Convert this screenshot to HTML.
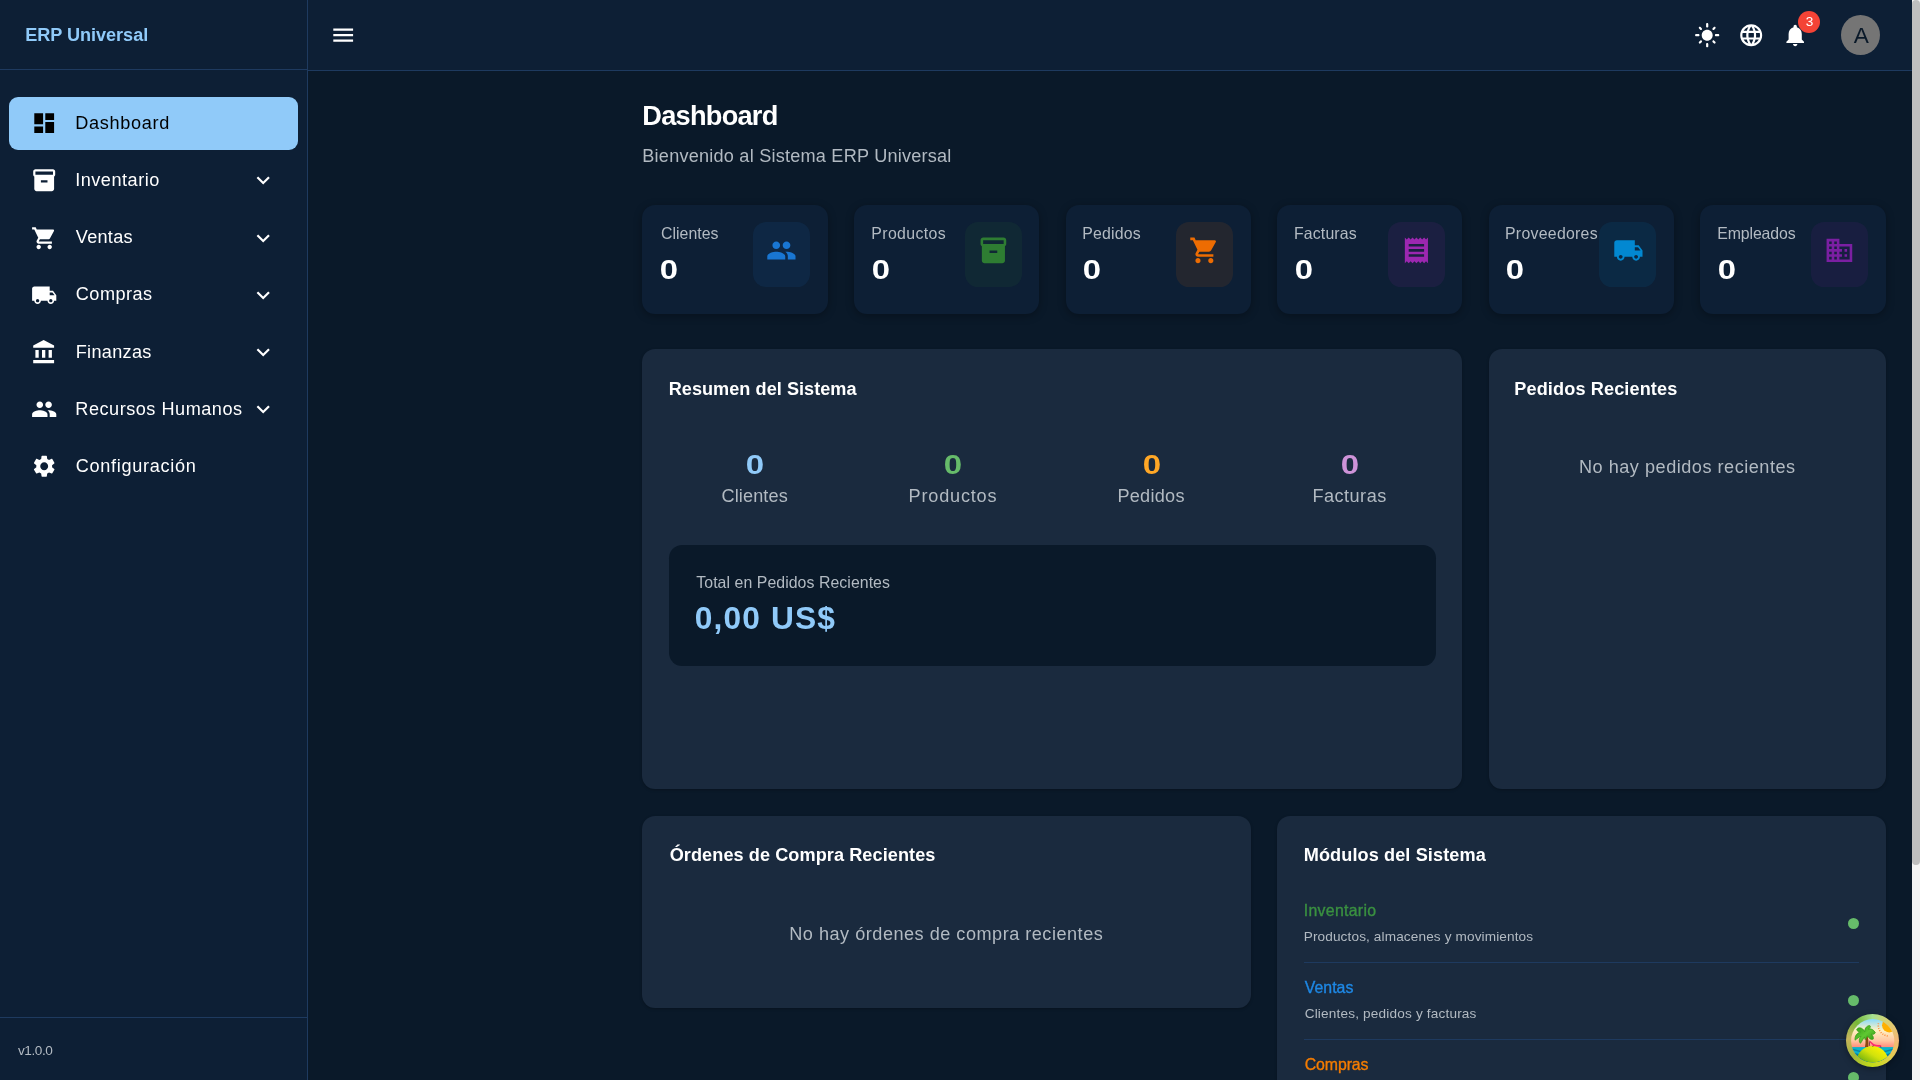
<!DOCTYPE html>
<html lang="es"><head><meta charset="utf-8"><title>ERP Universal - Dashboard</title>
<style>
html,body{margin:0;padding:0}
body{width:1920px;height:1080px;overflow:hidden;position:relative;background:#0a1929;font-family:"Liberation Sans",sans-serif}
.b,.i,.t{position:absolute;box-sizing:border-box}
.t{white-space:nowrap;line-height:1}
#app{position:absolute;left:0;top:0;width:1920px;height:1080px;overflow:hidden;will-change:transform}
.card{background:#0d1f35;border-radius:13.2px;box-shadow:0 2px 9px rgba(0,0,0,.3)}
.paper{background:#1a2a3e;border-radius:13.2px;box-shadow:0 1px 3px rgba(0,0,0,.25)}
</style></head><body>
<div id="app">
<main>
<div class="b card" style="left:642.4px;top:205px;width:185.2px;height:108.8px"></div>
<div class="b" style="left:752.9px;top:222px;width:57.2px;height:65px;border-radius:13.2px;background:rgba(25,118,210,0.1)"></div>
<svg class="i" style="left:766.10px;top:235.20px;width:30.8px;height:30.8px" viewBox="0 0 24 24" fill="#1976d2"><path d="M16 11c1.660 0 2.990-1.340 2.990-3S17.660 5 16 5c-1.660 0-3 1.340-3 3s1.340 3 3 3zm-8 0c1.660 0 2.990-1.340 2.990-3S9.660 5 8 5C6.340 5 5 6.340 5 8s1.340 3 3 3zm0 2c-2.330 0-7 1.170-7 3.500V19h14v-2.500c0-2.330-4.670-3.500-7-3.500zm8 0c-.29 0-.62.02-.97.05 1.160.84 1.970 1.970 1.970 3.450V19h6v-2.500c0-2.330-4.670-3.500-7-3.500z"/></svg>
<div class="b card" style="left:854.0px;top:205px;width:185.2px;height:108.8px"></div>
<div class="b" style="left:964.5px;top:222px;width:57.2px;height:65px;border-radius:13.2px;background:rgba(46,125,50,0.1)"></div>
<svg class="i" style="left:977.70px;top:235.20px;width:30.8px;height:30.8px" viewBox="0 0 24 24" fill="#2e7d32"><path d="M20 2H4c-1 0-2 .9-2 2v3.01c0 .72.43 1.34 1 1.69V20c0 1.1 1.1 2 2 2h14c.9 0 2-.9 2-2V8.7c.57-.35 1-.97 1-1.69V4c0-1.1-1-2-2-2zm-5 12H9v-2h6v2zm5-7H4V4h16v3z"/></svg>
<div class="b card" style="left:1065.6px;top:205px;width:185.2px;height:108.8px"></div>
<div class="b" style="left:1176.1px;top:222px;width:57.2px;height:65px;border-radius:13.2px;background:rgba(237,108,2,0.1)"></div>
<svg class="i" style="left:1189.30px;top:235.20px;width:30.8px;height:30.8px" viewBox="0 0 24 24" fill="#ed6c02"><path d="M7 18c-1.1 0-1.99.9-1.99 2S5.9 22 7 22s2-.9 2-2-.9-2-2-2zM1 2v2h2l3.6 7.59-1.35 2.45c-.16.28-.25.61-.25.96 0 1.1.9 2 2 2h12v-2H7.42c-.14 0-.25-.11-.25-.25l.03-.12.9-1.63h7.45c.75 0 1.41-.41 1.75-1.03l3.58-6.49c.08-.14.12-.31.12-.48 0-.55-.45-1-1-1H5.21l-.94-2H1zm16 16c-1.1 0-1.99.9-1.99 2s.89 2 1.99 2 2-.9 2-2-.9-2-2-2z"/></svg>
<div class="b card" style="left:1277.2px;top:205px;width:185.2px;height:108.8px"></div>
<div class="b" style="left:1387.7px;top:222px;width:57.2px;height:65px;border-radius:13.2px;background:rgba(156,39,176,0.1)"></div>
<svg class="i" style="left:1400.90px;top:235.20px;width:30.8px;height:30.8px" viewBox="0 0 24 24" fill="#9c27b0"><path d="M18 17H6v-2h12v2zm0-4H6v-2h12v2zm0-4H6V7h12v2zM3 22l1.500-1.500L6 22l1.500-1.500L9 22l1.500-1.500L12 22l1.500-1.500L15 22l1.500-1.500L18 22l1.500-1.500L21 22V2l-1.500 1.500L18 2l-1.500 1.500L15 2l-1.500 1.500L12 2l-1.500 1.500L9 2 7.500 3.500 6 2 4.500 3.500 3 2v20z"/></svg>
<div class="b card" style="left:1488.8px;top:205px;width:185.2px;height:108.8px"></div>
<div class="b" style="left:1599.3px;top:222px;width:57.2px;height:65px;border-radius:13.2px;background:rgba(2,136,209,0.1)"></div>
<svg class="i" style="left:1612.50px;top:235.20px;width:30.8px;height:30.8px" viewBox="0 0 24 24" fill="#0288d1"><path d="M20 8h-3V4H3c-1.1 0-2 .9-2 2v11h2c0 1.66 1.34 3 3 3s3-1.34 3-3h6c0 1.66 1.34 3 3 3s3-1.34 3-3h2v-5l-3-4zM6 18.5c-.83 0-1.5-.67-1.5-1.5s.67-1.500 1.5-1.500 1.5.67 1.5 1.5-.67 1.5-1.5 1.5zm13.5-9l1.960 2.500H17V9.500h2.500zm-1.500 9c-.83 0-1.500-.67-1.500-1.500s.67-1.500 1.500-1.500 1.500.67 1.500 1.500-.67 1.500-1.500 1.500z"/></svg>
<div class="b card" style="left:1700.4px;top:205px;width:185.2px;height:108.8px"></div>
<div class="b" style="left:1810.9px;top:222px;width:57.2px;height:65px;border-radius:13.2px;background:rgba(123,31,162,0.1)"></div>
<svg class="i" style="left:1824.10px;top:235.20px;width:30.8px;height:30.8px" viewBox="0 0 24 24" fill="#7b1fa2"><path d="M12 7V3H2v18h20V7H12zM6 19H4v-2h2v2zm0-4H4v-2h2v2zm0-4H4V9h2v2zm0-4H4V5h2v2zm4 12H8v-2h2v2zm0-4H8v-2h2v2zm0-4H8V9h2v2zm0-4H8V5h2v2zm10 12h-8v-2h2v-2h-2v-2h2v-2h-2V9h8v10zm-2-8h-2v2h2v-2zm0 4h-2v2h2v-2z"/></svg>
<div class="b paper" style="left:642.4px;top:348.7px;width:820px;height:440px"></div>
<div class="b paper" style="left:1488.8px;top:348.7px;width:396.8px;height:440px"></div>
<div class="b" style="left:669.2px;top:545px;width:766.8px;height:120.8px;border-radius:13.2px;background:#0a1929"></div>
<div class="b paper" style="left:642.4px;top:815.8px;width:608.4px;height:192.5px"></div>
<div class="b paper" style="left:1277.2px;top:815.8px;width:608.4px;height:400px"></div>
<div class="b" style="left:1304px;top:962.0px;width:555.2px;height:1px;background:#1e3a5f"></div>
<div class="b" style="left:1848px;top:917.8px;width:11px;height:11px;border-radius:50%;background:#66bb6a"></div>
<div class="b" style="left:1304px;top:1039.1px;width:555.2px;height:1px;background:#1e3a5f"></div>
<div class="b" style="left:1848px;top:994.9px;width:11px;height:11px;border-radius:50%;background:#66bb6a"></div>
<div class="b" style="left:1304px;top:1116.2px;width:555.2px;height:1px;background:#1e3a5f"></div>
<div class="b" style="left:1848px;top:1072.0px;width:11px;height:11px;border-radius:50%;background:#66bb6a"></div>
<div class="t" id="t9" style="left:642.30px;top:102px;font-size:27.19px;color:#ffffff;font-weight:700;letter-spacing:-0.750px;">Dashboard</div>
<div class="t" id="t10" style="left:642.30px;top:147px;font-size:18.13px;color:#b2bac2;letter-spacing:0.219px;">Bienvenido al Sistema ERP Universal</div>
<div class="t" id="t11" style="left:661.00px;top:226px;font-size:15.86px;color:#b2bac2;letter-spacing:0.019px;">Clientes</div>
<div class="t" id="t12" style="left:660.00px;top:256px;font-size:27.19px;color:#ffffff;font-weight:700;transform:scaleX(1.208);transform-origin:1.0px 50%;">0</div>
<div class="t" id="t13" style="left:871.30px;top:226px;font-size:15.86px;color:#b2bac2;letter-spacing:0.365px;">Productos</div>
<div class="t" id="t14" style="left:871.60px;top:256px;font-size:27.19px;color:#ffffff;font-weight:700;transform:scaleX(1.208);transform-origin:1.0px 50%;">0</div>
<div class="t" id="t15" style="left:1082.30px;top:226px;font-size:15.86px;color:#b2bac2;letter-spacing:0.170px;">Pedidos</div>
<div class="t" id="t16" style="left:1083.20px;top:256px;font-size:27.19px;color:#ffffff;font-weight:700;transform:scaleX(1.208);transform-origin:1.0px 50%;">0</div>
<div class="t" id="t17" style="left:1294.00px;top:226px;font-size:15.86px;color:#b2bac2;letter-spacing:0.134px;">Facturas</div>
<div class="t" id="t18" style="left:1294.80px;top:256px;font-size:27.19px;color:#ffffff;font-weight:700;transform:scaleX(1.208);transform-origin:1.0px 50%;">0</div>
<div class="t" id="t19" style="left:1505.00px;top:226px;font-size:15.86px;color:#b2bac2;letter-spacing:0.271px;">Proveedores</div>
<div class="t" id="t20" style="left:1506.40px;top:256px;font-size:27.19px;color:#ffffff;font-weight:700;transform:scaleX(1.208);transform-origin:1.0px 50%;">0</div>
<div class="t" id="t21" style="left:1717.30px;top:226px;font-size:15.86px;color:#b2bac2;letter-spacing:-0.127px;">Empleados</div>
<div class="t" id="t22" style="left:1718.00px;top:256px;font-size:27.19px;color:#ffffff;font-weight:700;transform:scaleX(1.208);transform-origin:1.0px 50%;">0</div>
<div class="t" id="t23" style="left:668.70px;top:380px;font-size:18.13px;color:#ffffff;font-weight:700;letter-spacing:0.037px;">Resumen del Sistema</div>
<div class="t" id="t24" style="left:1514.30px;top:380px;font-size:18.13px;color:#ffffff;font-weight:700;letter-spacing:0.121px;">Pedidos Recientes</div>
<div class="t" id="t25" style="left:745.70px;top:451px;font-size:27.19px;color:#90caf9;font-weight:700;transform:scaleX(1.215);transform-origin:1.0px 50%;">0</div>
<div class="t" id="t26" style="left:721.45px;top:487px;font-size:18.13px;color:#b2bac2;letter-spacing:0.133px;">Clientes</div>
<div class="t" id="t27" style="left:944.10px;top:451px;font-size:27.19px;color:#66bb6a;font-weight:700;transform:scaleX(1.215);transform-origin:1.0px 50%;">0</div>
<div class="t" id="t28" style="left:908.50px;top:487px;font-size:18.13px;color:#b2bac2;letter-spacing:0.815px;">Productos</div>
<div class="t" id="t29" style="left:1142.50px;top:451px;font-size:27.19px;color:#ffa726;font-weight:700;transform:scaleX(1.215);transform-origin:1.0px 50%;">0</div>
<div class="t" id="t30" style="left:1117.40px;top:487px;font-size:18.13px;color:#b2bac2;letter-spacing:0.269px;">Pedidos</div>
<div class="t" id="t31" style="left:1340.90px;top:451px;font-size:27.19px;color:#ce93d8;font-weight:700;transform:scaleX(1.215);transform-origin:1.0px 50%;">0</div>
<div class="t" id="t32" style="left:1312.40px;top:487px;font-size:18.13px;color:#b2bac2;letter-spacing:0.487px;">Facturas</div>
<div class="t" id="t33" style="left:696.30px;top:575px;font-size:15.86px;color:#b2bac2;letter-spacing:0.057px;">Total en Pedidos Recientes</div>
<div class="t" id="t34" style="left:694.80px;top:603px;font-size:31.72px;color:#90caf9;font-weight:700;letter-spacing:1.127px;">0,00 US$</div>
<div class="t" id="t35" style="left:1579.00px;top:458px;font-size:18.13px;color:#b2bac2;letter-spacing:0.509px;">No hay pedidos recientes</div>
<div class="t" id="t36" style="left:669.70px;top:846px;font-size:18.13px;color:#ffffff;font-weight:700;letter-spacing:0.076px;">Órdenes de Compra Recientes</div>
<div class="t" id="t37" style="left:789.30px;top:925px;font-size:18.13px;color:#b2bac2;letter-spacing:0.500px;">No hay órdenes de compra recientes</div>
<div class="t" id="t38" style="left:1303.70px;top:846px;font-size:18.13px;color:#ffffff;font-weight:700;letter-spacing:0.108px;">Módulos del Sistema</div>
<div class="t" id="t39" style="left:1303.70px;top:903px;font-size:15.86px;color:#3a9140;letter-spacing:0.308px;-webkit-text-stroke:0.35px #3a9140;">Inventario</div>
<div class="t" id="t40" style="left:1303.70px;top:930px;font-size:13.6px;color:#b2bac2;letter-spacing:0.129px;">Productos, almacenes y movimientos</div>
<div class="t" id="t41" style="left:1304.70px;top:980px;font-size:15.86px;color:#1e88e5;letter-spacing:0.046px;-webkit-text-stroke:0.35px #1e88e5;">Ventas</div>
<div class="t" id="t42" style="left:1304.70px;top:1007px;font-size:13.6px;color:#b2bac2;letter-spacing:0.174px;">Clientes, pedidos y facturas</div>
<div class="t" id="t43" style="left:1304.70px;top:1057px;font-size:15.86px;color:#f57c00;letter-spacing:-0.084px;-webkit-text-stroke:0.35px #f57c00;">Compras</div>
<div class="t" id="t44" style="left:1303.70px;top:1084px;font-size:13.6px;color:#b2bac2;letter-spacing:0.244px;">Proveedores y órdenes de compra</div>
</main>
<aside>
<div class="b" style="left:0;top:0;width:308px;height:1080px;background:#0d1f35;border-right:1px solid #1e3a5f"></div>
<div class="b" style="left:0;top:69px;width:307px;height:1px;background:#1e3a5f"></div>
<div class="b" style="left:0;top:1017px;width:307px;height:1px;background:#1e3a5f"></div>
<div class="b" style="left:9px;top:97px;width:289px;height:53px;background:#90caf9;border-radius:9px"></div>
<svg class="i" style="left:30.80px;top:110.20px;width:26.4px;height:26.4px" viewBox="0 0 24 24" fill="#000"><path d="M3 13h8V3H3v10zm0 8h8v-6H3v6zm10 0h8V11h-8v10zm0-18v6h8V3h-8z"/></svg>
<svg class="i" style="left:30.80px;top:167.40px;width:26.4px;height:26.4px" viewBox="0 0 24 24" fill="#ffffff"><path d="M20 2H4c-1 0-2 .9-2 2v3.01c0 .72.43 1.34 1 1.69V20c0 1.1 1.1 2 2 2h14c.9 0 2-.9 2-2V8.7c.57-.35 1-.97 1-1.69V4c0-1.1-1-2-2-2zm-5 12H9v-2h6v2zm5-7H4V4h16v3z"/></svg>
<svg class="i" style="left:249.80px;top:167.40px;width:26.4px;height:26.4px" viewBox="0 0 24 24" fill="#ffffff"><path d="M16.590 8.590L12 13.170 7.410 8.590 6 10l6 6 6-6z"/></svg>
<svg class="i" style="left:30.80px;top:224.60px;width:26.4px;height:26.4px" viewBox="0 0 24 24" fill="#ffffff"><path d="M7 18c-1.1 0-1.99.9-1.99 2S5.9 22 7 22s2-.9 2-2-.9-2-2-2zM1 2v2h2l3.6 7.59-1.35 2.45c-.16.28-.25.61-.25.96 0 1.1.9 2 2 2h12v-2H7.42c-.14 0-.25-.11-.25-.25l.03-.12.9-1.63h7.45c.75 0 1.41-.41 1.75-1.03l3.58-6.49c.08-.14.12-.31.12-.48 0-.55-.45-1-1-1H5.21l-.94-2H1zm16 16c-1.1 0-1.99.9-1.99 2s.89 2 1.99 2 2-.9 2-2-.9-2-2-2z"/></svg>
<svg class="i" style="left:249.80px;top:224.60px;width:26.4px;height:26.4px" viewBox="0 0 24 24" fill="#ffffff"><path d="M16.590 8.590L12 13.170 7.410 8.590 6 10l6 6 6-6z"/></svg>
<svg class="i" style="left:30.80px;top:281.80px;width:26.4px;height:26.4px" viewBox="0 0 24 24" fill="#ffffff"><path d="M20 8h-3V4H3c-1.1 0-2 .9-2 2v11h2c0 1.66 1.34 3 3 3s3-1.34 3-3h6c0 1.66 1.34 3 3 3s3-1.34 3-3h2v-5l-3-4zM6 18.5c-.83 0-1.5-.67-1.5-1.5s.67-1.500 1.5-1.500 1.5.67 1.5 1.5-.67 1.5-1.5 1.5zm13.5-9l1.960 2.500H17V9.500h2.500zm-1.500 9c-.83 0-1.500-.67-1.500-1.500s.67-1.500 1.500-1.500 1.500.67 1.500 1.500-.67 1.500-1.500 1.500z"/></svg>
<svg class="i" style="left:249.80px;top:281.80px;width:26.4px;height:26.4px" viewBox="0 0 24 24" fill="#ffffff"><path d="M16.590 8.590L12 13.170 7.410 8.590 6 10l6 6 6-6z"/></svg>
<svg class="i" style="left:30.80px;top:339.00px;width:26.4px;height:26.4px" viewBox="0 0 24 24" fill="#ffffff"><path d="M4 10v7h3v-7H4zm6 0v7h3v-7h-3zM2 22h19v-3H2v3zm14-12v7h3v-7h-3zm-4.500-9L2 6v2h19V6l-9.500-5z"/></svg>
<svg class="i" style="left:249.80px;top:339.00px;width:26.4px;height:26.4px" viewBox="0 0 24 24" fill="#ffffff"><path d="M16.590 8.590L12 13.170 7.410 8.590 6 10l6 6 6-6z"/></svg>
<svg class="i" style="left:30.80px;top:396.20px;width:26.4px;height:26.4px" viewBox="0 0 24 24" fill="#ffffff"><path d="M16 11c1.660 0 2.990-1.340 2.990-3S17.660 5 16 5c-1.660 0-3 1.340-3 3s1.340 3 3 3zm-8 0c1.660 0 2.990-1.340 2.990-3S9.660 5 8 5C6.340 5 5 6.340 5 8s1.340 3 3 3zm0 2c-2.330 0-7 1.170-7 3.500V19h14v-2.500c0-2.330-4.670-3.500-7-3.500zm8 0c-.29 0-.62.02-.97.05 1.160.84 1.970 1.970 1.970 3.450V19h6v-2.500c0-2.330-4.670-3.500-7-3.500z"/></svg>
<svg class="i" style="left:249.80px;top:396.20px;width:26.4px;height:26.4px" viewBox="0 0 24 24" fill="#ffffff"><path d="M16.590 8.590L12 13.170 7.410 8.590 6 10l6 6 6-6z"/></svg>
<svg class="i" style="left:30.80px;top:453.40px;width:26.4px;height:26.4px" viewBox="0 0 24 24" fill="#ffffff"><path d="M19.14 12.94c.04-.3.06-.61.06-.94 0-.32-.02-.64-.07-.94l2.030-1.580c.18-.14.23-.41.12-.61l-1.920-3.320c-.12-.22-.37-.29-.59-.22l-2.390.96c-.5-.38-1.030-.7-1.620-.94l-.36-2.540c-.04-.24-.24-.41-.48-.41h-3.840c-.24 0-.43.17-.47.41l-.36 2.540c-.59.24-1.130.57-1.620.94l-2.390-.96c-.22-.08-.47 0-.59.22L2.740 8.870c-.12.21-.08.47.12.61l2.030 1.580c-.05.3-.09.63-.09.94s.02.64.07.94l-2.030 1.580c-.18.14-.23.41-.12.61l1.920 3.320c.12.22.37.29.59.22l2.390-.96c.5.38 1.030.7 1.620.94l.36 2.540c.05.24.24.41.48.41h3.840c.24 0 .44-.17.47-.41l.36-2.540c.59-.24 1.130-.56 1.620-.94l2.390.96c.22.08.47 0 .59-.22l1.920-3.320c.12-.22.07-.47-.12-.61l-2.010-1.580zM12 15.600c-1.980 0-3.600-1.620-3.600-3.600s1.620-3.600 3.600-3.600 3.600 1.620 3.600 3.600-1.620 3.600-3.600 3.600z"/></svg>
<div class="t" id="t0" style="left:25.30px;top:26px;font-size:18.13px;color:#90caf9;font-weight:700;letter-spacing:-0.048px;">ERP Universal</div>
<div class="t" id="t1" style="left:75.30px;top:114px;font-size:18.13px;color:#000;letter-spacing:0.685px;">Dashboard</div>
<div class="t" id="t2" style="left:75.20px;top:171px;font-size:18.13px;color:#ffffff;letter-spacing:0.505px;">Inventario</div>
<div class="t" id="t3" style="left:75.80px;top:228px;font-size:18.13px;color:#ffffff;letter-spacing:0.275px;">Ventas</div>
<div class="t" id="t4" style="left:75.80px;top:285px;font-size:18.13px;color:#ffffff;letter-spacing:0.465px;">Compras</div>
<div class="t" id="t5" style="left:75.70px;top:343px;font-size:18.13px;color:#ffffff;letter-spacing:0.311px;">Finanzas</div>
<div class="t" id="t6" style="left:75.30px;top:400px;font-size:18.13px;color:#ffffff;letter-spacing:0.515px;">Recursos Humanos</div>
<div class="t" id="t7" style="left:75.80px;top:457px;font-size:18.13px;color:#ffffff;letter-spacing:0.686px;">Configuración</div>
<div class="t" id="t8" style="left:18.00px;top:1044px;font-size:13.6px;color:#b2bac2;letter-spacing:-0.434px;">v1.0.0</div>
</aside>
<header>
<div class="b" style="left:308px;top:0;width:1604px;height:71px;background:#0d1f35;border-bottom:1px solid #1e3a5f"></div>
<svg class="i" style="left:329.80px;top:21.90px;width:26.4px;height:26.4px" viewBox="0 0 24 24" fill="#ffffff"><path d="M3 18h18v-2H3v2zm0-5h18v-2H3v2zm0-7v2h18V6H3z"/></svg>
<svg class="i" style="left:1694.00px;top:21.80px;width:26.4px;height:26.4px" viewBox="0 0 24 24" fill="#ffffff"><path d="M12 7c-2.760 0-5 2.240-5 5s2.240 5 5 5 5-2.240 5-5-2.240-5-5-5zM2 13h2c.55 0 1-.45 1-1s-.45-1-1-1H2c-.55 0-1 .45-1 1s.45 1 1 1zm18 0h2c.55 0 1-.45 1-1s-.45-1-1-1h-2c-.55 0-1 .45-1 1s.45 1 1 1zM11 2v2c0 .55.45 1 1 1s1-.45 1-1V2c0-.55-.45-1-1-1s-1 .45-1 1zm0 18v2c0 .55.45 1 1 1s1-.45 1-1v-2c0-.55-.45-1-1-1s-1 .45-1 1zM5.990 4.580c-.39-.39-1.030-.39-1.410 0-.39.39-.39 1.030 0 1.410l1.060 1.060c.39.39 1.030.39 1.410 0s.39-1.030 0-1.410L5.990 4.580zm12.370 12.370c-.39-.39-1.030-.39-1.410 0-.39.39-.39 1.030 0 1.410l1.060 1.060c.39.39 1.030.39 1.410 0 .39-.39.39-1.030 0-1.410l-1.060-1.060zm1.060-10.960c.39-.39.39-1.030 0-1.410-.39-.39-1.030-.39-1.410 0l-1.060 1.060c-.39.39-.39 1.030 0 1.410s1.030.39 1.410 0l1.060-1.060zM7.050 18.360c.39-.39.39-1.030 0-1.410-.39-.39-1.030-.39-1.410 0l-1.060 1.060c-.39.39-.39 1.030 0 1.410s1.030.39 1.410 0l1.060-1.060z"/></svg>
<svg class="i" style="left:1738.00px;top:21.80px;width:26.4px;height:26.4px" viewBox="0 0 24 24" fill="#ffffff"><path d="M11.990 2C6.470 2 2 6.480 2 12s4.470 10 9.990 10C17.520 22 22 17.520 22 12S17.520 2 11.990 2zm6.930 6h-2.950c-.32-1.250-.78-2.450-1.380-3.560 1.840.63 3.370 1.910 4.330 3.560zM12 4.040c.83 1.200 1.480 2.530 1.910 3.960h-3.820c.43-1.430 1.080-2.760 1.910-3.960zM4.260 14C4.100 13.360 4 12.690 4 12s.1-1.360.26-2h3.380c-.08.66-.14 1.320-.14 2 0 .68.06 1.340.14 2H4.260zm.82 2h2.950c.32 1.250.78 2.450 1.380 3.560-1.840-.63-3.370-1.900-4.330-3.560zm2.950-8H5.080c.96-1.660 2.490-2.930 4.330-3.560C8.810 5.550 8.350 6.750 8.030 8zM12 19.960c-.83-1.200-1.480-2.530-1.910-3.960h3.820c-.43 1.430-1.080 2.760-1.910 3.960zM14.340 14H9.660c-.09-.66-.16-1.320-.16-2 0-.68.07-1.350.16-2h4.680c.09.65.16 1.320.16 2 0 .68-.07 1.340-.16 2zm.25 5.560c.6-1.110 1.060-2.310 1.380-3.560h2.950c-.96 1.650-2.490 2.930-4.330 3.560zM16.360 14c.08-.66.14-1.320.14-2 0-.68-.06-1.340-.14-2h3.380c.16.64.26 1.310.26 2s-.1 1.360-.26 2h-3.380z"/></svg>
<svg class="i" style="left:1782.00px;top:21.80px;width:26.4px;height:26.4px" viewBox="0 0 24 24" fill="#ffffff"><path d="M12 22c1.100 0 2-.9 2-2h-4c0 1.100.89 2 2 2zm6-6v-5c0-3.070-1.640-5.640-4.500-6.320V4c0-.83-.67-1.500-1.500-1.500s-1.500.67-1.500 1.500v.68C7.630 5.360 6 7.920 6 11v5l-2 2v1h16v-1l-2-2z"/></svg>
<div class="b" style="left:1798px;top:11px;width:22px;height:22px;border-radius:11px;background:#f44336"></div>
<div class="b" style="left:1841px;top:15px;width:39.2px;height:40px;border-radius:50%;background:#757575"></div>
<div class="t" id="t45" style="left:1805.75px;top:15px;font-size:13.6px;color:#ffffff;">3</div>
<div class="t" id="t46" style="left:1853.83px;top:24px;font-size:22.66px;color:#0a1929;">A</div>
</header>
<div class="b" style="left:1912px;top:0;width:8px;height:1080px;background:#f4f4f4"></div>
<div class="b" style="left:1912px;top:0;width:8px;height:865px;background:#bfbfbf;border-radius:4px"></div>
<div class="b" style="left:1845.8px;top:1013.8px;width:53.4px;height:53.4px;border-radius:50%;background:conic-gradient(from 0deg,#a6e090 0deg,#dccf6e 40deg,#f3b878 90deg,#e2cf4a 135deg,#c4dc16 180deg,#a2b638 230deg,#c6b45c 275deg,#76b838 320deg,#a6e090 360deg);box-shadow:0 2px 6px rgba(0,0,0,.35)"></div>
<svg class="i" style="left:1845.8px;top:1013.8px;width:53.4px;height:53.4px" viewBox="0 0 100 100">
<defs>
<linearGradient id="sky" x1="0" y1="0" x2="0" y2="1"><stop offset="0.08" stop-color="#7fd8ff"/><stop offset=".3" stop-color="#fff2c2"/><stop offset=".5" stop-color="#ffc7a2"/><stop offset=".63" stop-color="#ff8878"/></linearGradient>
<linearGradient id="isl" x1="0.75" y1="0" x2="0.3" y2="0.75"><stop offset="0" stop-color="#fff400"/><stop offset=".4" stop-color="#d2e20c"/><stop offset=".75" stop-color="#7cb80e"/><stop offset="1" stop-color="#3f9410"/></linearGradient>
<linearGradient id="leaf" x1="0" y1="0" x2="1" y2="1"><stop offset="0" stop-color="#2f9a14"/><stop offset=".5" stop-color="#5fc832"/><stop offset="1" stop-color="#2c8c12"/></linearGradient>
<clipPath id="cp"><circle cx="50" cy="50" r="40.5"/></clipPath>
</defs>
<g clip-path="url(#cp)">
<rect x="0" y="0" width="100" height="100" fill="url(#sky)"/>
<circle cx="81" cy="21" r="13.5" fill="#ffb000"/>
<path d="M60.800 17.400 A20.500 20.500 0 0 0 79.200 41.400" fill="none" stroke="#ff8a3c" stroke-width="3" stroke-dasharray="1.800 2.600"/>
<rect x="0" y="62" width="100" height="40" fill="#08b4cc"/>
<path d="M0 67 Q10 63 20 67 T40 67 T60 67 T80 67 T100 67 V70 Q90 66 80 70 T60 70 T40 70 T20 70 T0 70z" fill="#0a86a6"/>
<path d="M0 74 Q10 70 20 74 T40 74 T60 74 T80 74 T100 74 V78 Q90 74 80 78 T60 78 T40 78 T20 78 T0 78z" fill="#0a7c9c"/>
<rect x="0" y="82" width="100" height="20" fill="#0a6f8c"/>
<ellipse cx="49.500" cy="90.500" rx="30" ry="30.500" fill="url(#isl)"/>
<path d="M35.500 62 C37.500 53 37 45 34 37 L38.500 35.500 C42 44 43 53 41.500 62z" fill="#8a4a12"/>
<path d="M35 33 C31 25 23 24 20 29 C21 33 24 33 27 34 C21 35 16 41 17 49 C21 46 24 43 28 42 C24 46 24 52 27 55 C30 51 32 46 35 43 C35 45 35 47 36 48 C38 45 39 43 40 41 C43 45 47 49 51 47 C52 43 50 40 47 38 C51 39 54 37 55 35 C52 29 46 27 42 28 C45 26 47 24 45 22 C40 21 35 26 35 33z" fill="url(#leaf)" stroke="#3aa01c" stroke-width="1.5" stroke-linejoin="round"/>
<path d="M44 49.500 C48 52 50 55 53 56.500 C57 58 62 57.500 66 58.500 L65.500 61.500 C60 61 55 61 52 60 C48 58 46 54 43 51z" fill="#ff2d6e"/>
<path d="M44.500 52 L43.500 60 M51 59 L50 61.500 M65 60.500 L65.500 63" stroke="#5a2a3a" stroke-width="1.500" fill="none"/>
</g>
</svg>
</div>
</body></html>
